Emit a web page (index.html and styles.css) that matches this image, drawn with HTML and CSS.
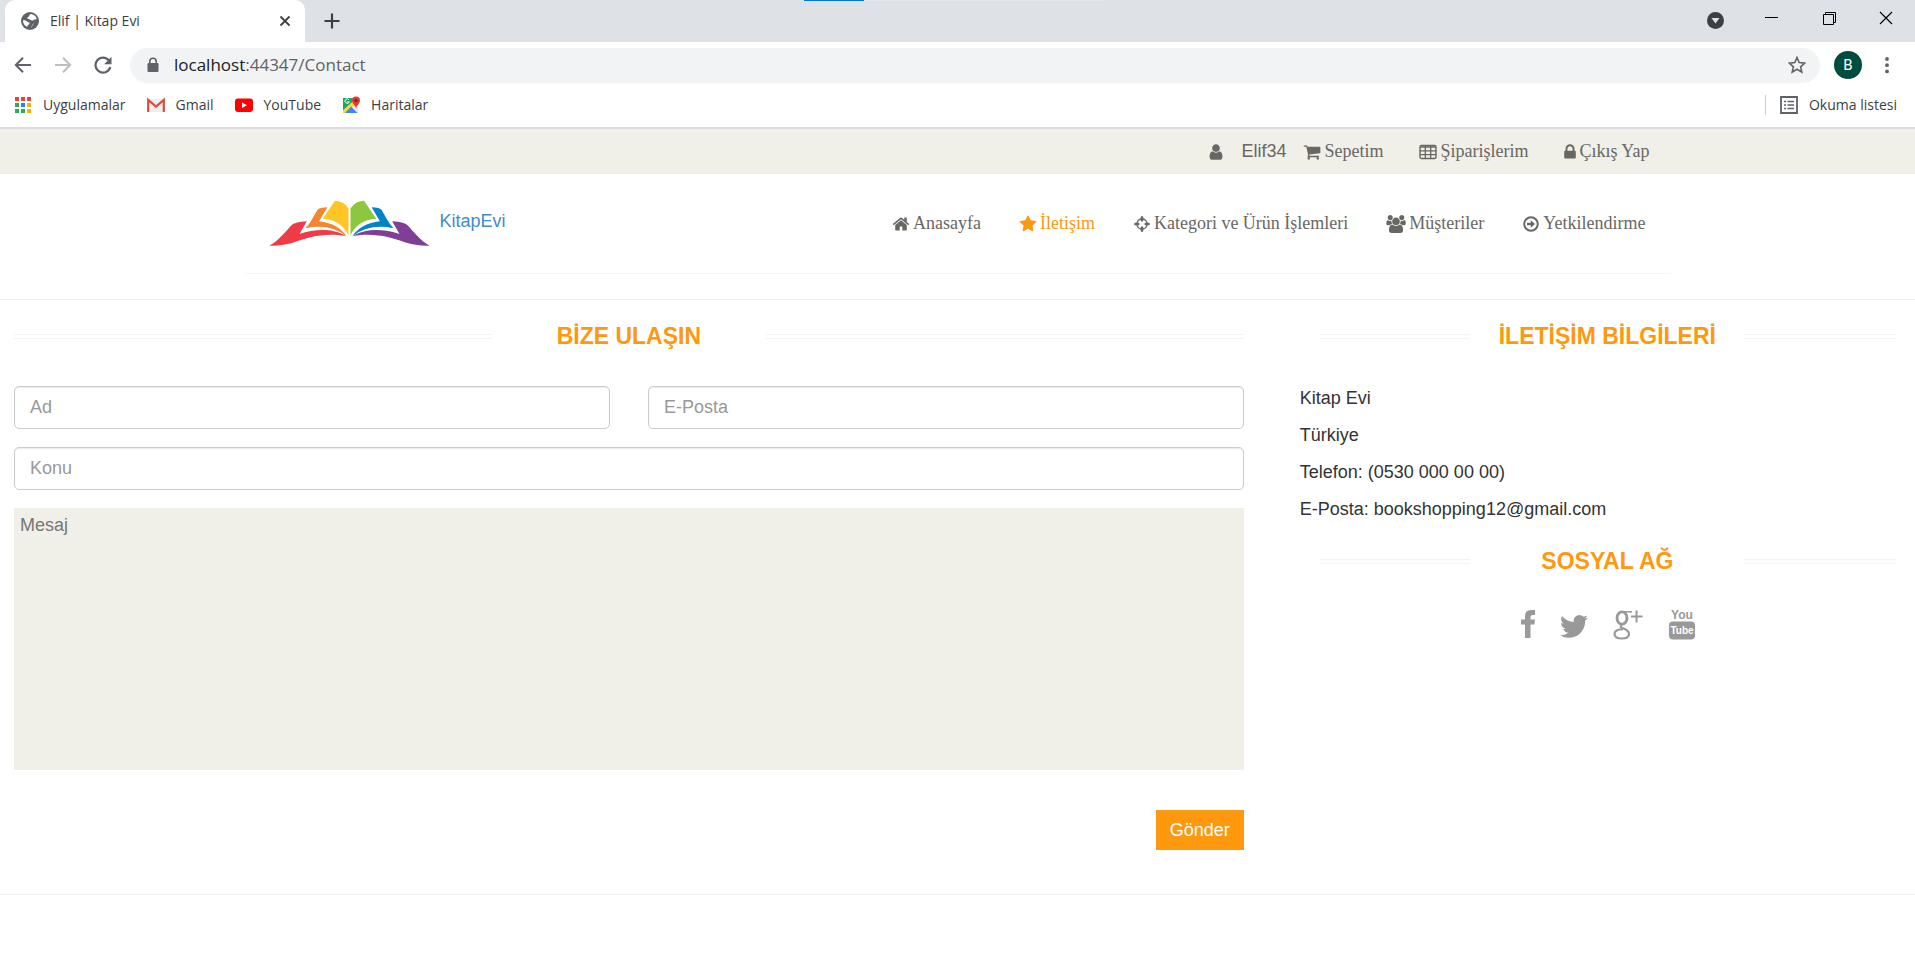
FILE: index.html
```html
<!DOCTYPE html>
<html lang="tr">
<head>
<meta charset="utf-8">
<title>Elif | Kitap Evi</title>
<link rel="stylesheet" href="styles.css">
</head>
<body>
<div class="browser">
  <div class="tabstrip">
    <div class="tab">
      <svg class="i18" viewBox="0 0 18 18"><circle cx="9" cy="9" r="9" fill="#5f6368"/><path d="M9.5 2c-1.800 1-.5 2.200-2 2.800S6 7 7.500 7s2.500 1.800 4 1.500 1.500-1.700 4.300-1.300A7 7 0 0 0 9.500 2zM2 8.500C2.500 8 5 8.500 6 9.500s2.500.5 2.500 2-2 1-2 2.500c0 1-1 .5-1 .5A7 7 0 0 1 2 8.500zM10 16c0-1.500 1.500-2 1.500-3.500L13 11" fill="#fff"/></svg>
      <span class="tab-title">Elif | Kitap Evi</span>
      <button class="plain" aria-label="Sekmeyi kapat"><svg class="i18" viewBox="0 0 18 18"><path d="M4.500 4.500l9 9m0-9l-9 9" stroke="#3c4043" stroke-width="1.800"/></svg></button>
    </div>
    <button class="plain newtab" aria-label="Yeni sekme"><svg class="i18" viewBox="0 0 18 18"><path d="M9 1.500v15M1.500 9h15" stroke="#3c4043" stroke-width="2.200"/></svg></button>
    <span class="strip-mark"><span class="strip-fill"></span></span>
    <div class="window-buttons">
      <button class="plain" aria-label="Sekmelerde ara"><svg class="i18" viewBox="0 0 18 18"><circle cx="9.500" cy="11.500" r="8.500" fill="#3c4043"/><path d="M5.500 9h8l-4 5.500z" fill="#dee1e6"/></svg></button>
      <button class="plain" aria-label="Simge durumuna küçült"><svg class="i18" viewBox="0 0 18 18"><path d="M2 8.500h13" stroke="#000"/></svg></button>
      <button class="plain" aria-label="Geri yükle"><svg class="i18" viewBox="0 0 18 18"><path d="M3.500 5.500h10v10h-10zM5.500 5.500v-2h10v10h-2" fill="none" stroke="#000"/></svg></button>
      <button class="plain" aria-label="Kapat"><svg class="i18" viewBox="0 0 18 18"><path d="M3 3l12 12M15 3L3 15" stroke="#000" stroke-width="1.200"/></svg></button>
    </div>
  </div>
  <div class="toolbar">
    <button class="plain" aria-label="Geri"><svg class="i18" viewBox="0 0 18 18"><path d="M17 9H2M9 1.800L1.800 9 9 16.200" fill="none" stroke="#5f6368" stroke-width="2"/></svg></button>
    <button class="plain" aria-label="İleri"><svg class="i18" viewBox="0 0 18 18"><path d="M1 9h15M9 1.800L16.200 9 9 16.200" fill="none" stroke="#bdbfc1" stroke-width="2"/></svg></button>
    <button class="plain" aria-label="Yenile"><svg class="i18" viewBox="0 0 18 18"><path d="M15 4.500A7.500 7.500 0 1 0 16.300 11" fill="none" stroke="#5f6368" stroke-width="2.200"/><path d="M17.500.8v7.400h-7.400z" fill="#5f6368"/></svg></button>
    <div class="omnibox">
      <svg class="i18" viewBox="0 0 18 18"><path d="M5.800 8V5.500a3.200 3.200 0 0 1 6.400 0V8" fill="none" stroke="#5f6368" stroke-width="1.600"/><rect x="3.500" y="7" width="11" height="9" rx="1.200" fill="#5f6368"/></svg>
      <div class="url" role="textbox" contenteditable="true" spellcheck="false" aria-label="Adres"><span class="host">localhost</span>:44347/Contact</div>
      <button class="plain" aria-label="Yer işareti"><svg class="i18" viewBox="0 0 18 18"><path d="M9 1.500l2.200 5.100 5.600.5-4.200 3.700 1.200 5.400L9 13.300l-4.800 2.900 1.200-5.400L1.200 7.100l5.600-.5z" fill="none" stroke="#5f6368" stroke-width="1.600"/></svg></button>
    </div>
    <button class="plain avatar" aria-label="Profil">B</button>
    <button class="plain" aria-label="Menü"><svg class="i18" viewBox="0 0 18 18"><g fill="#5f6368"><circle cx="9" cy="3" r="1.900"/><circle cx="9" cy="9.200" r="1.900"/><circle cx="9" cy="15.400" r="1.900"/></g></svg></button>
  </div>
  <div class="bookmarks">
    <a href="#"><svg class="i18" viewBox="0 0 18 18"><g fill="#ea4335"><path d="M1 1h4v4H1zM7 1h4v4H7zM13 1h4v4h-4z"/></g><path d="M1 7h4v4H1zM1 13h4v4H1z" fill="#34a853"/><path d="M7 7h4v4H7z" fill="#1a87f5"/><path d="M7 13h4v4H7z" fill="#34a853"/><path d="M13 7h4v4h-4zM13 13h4v4h-4z" fill="#fbb004"/></svg>Uygulamalar</a>
    <a href="#"><svg class="i18" viewBox="0 0 18 18"><path d="M2 3h14v13H2z" fill="#eee"/><path d="M1.200 16V3.800L9 10.500l7.800-6.700V16" fill="none" stroke="#dd4b3e" stroke-width="2.200"/></svg>Gmail</a>
    <a href="#"><svg class="i18" viewBox="0 0 18 18"><rect y="2.500" width="18" height="13.500" rx="3" fill="#f00"/><path d="M7 6.500v5.500l5-2.750z" fill="#fff"/></svg>YouTube</a>
    <a href="#"><svg class="i18" viewBox="0 0 18 18"><path d="M1 2h15v15H1z" fill="#e8eaed"/><path d="M1 2h11v5L1 16z" fill="#1fa463"/><path d="M1 14L13 3l3 3L4 17H1z" fill="#fdd835"/><path d="M1 2h9v4L1 14z" fill="#1fa463"/><path d="M3 17l6-6.500 6.500 6.500z" fill="#4285f4"/><path d="M7 3.800a2.200 2.200 0 1 0 .3 2H5.300" fill="none" stroke="#fff"/><path d="M14 13c0-3.500-4-5-4-8.500a4 4 0 0 1 8 0C18 8 14 9.500 14 13z" fill="#e53935"/><circle cx="14" cy="4.500" r="1.500" fill="#7d1a17"/></svg>Haritalar</a>
    <a class="reading" href="#"><svg class="i18" viewBox="0 0 18 18"><path d="M1 1h16v16H1z" fill="none" stroke="#5f6368" stroke-width="1.800"/><path d="M4 5.500h2m1.500 0H14M4 9h2m1.500 0H14M4 12.500h2m1.500 0H14" stroke="#5f6368" stroke-width="1.600"/></svg>Okuma listesi</a>
  </div>
</div>

<header>
  <div class="topbar">
    <nav class="container account">
      <a class="user" href="#"><svg class="fa" viewBox="0 0 1792 1792"><path d="M1536 1399q0 109-62.500 187t-150.500 78h-854q-88 0-150.500-78t-62.500-187q0-85 8.500-160.500t31.500-152 58.500-131 94-89 134.500-34.500q131 128 313 128t313-128q76 0 134.500 34.500t94 89 58.500 131 31.500 152 8.500 160.500zm-256-887q0 159-112.500 271.500t-271.500 112.500-271.500-112.500-112.500-271.500 112.500-271.500 271.500-112.500 271.500 112.500 112.500 271.500z"/></svg>Elif34</a>
      <a href="#"><svg class="fa" viewBox="0 0 1792 1792"><path d="M704 1536q0 52-38 90t-90 38-90-38-38-90 38-90 90-38 90 38 38 90zm896 0q0 52-38 90t-90 38-90-38-38-90 38-90 90-38 90 38 38 90zm128-1088v512q0 24-16.500 42.500t-40.500 21.500l-1044 122q13 60 13 70 0 16-24 64h920q26 0 45 19t19 45-19 45-45 19h-1024q-26 0-45-19t-19-45q0-11 8-31.500t16-36 21.500-40 15.500-29.500l-177-823h-204q-26 0-45-19t-19-45 19-45 45-19h256q16 0 28.500 6.500t19.500 15.500 13 24.500 8 26 5.500 29.500 4.500 26h1201q26 0 45 19t19 45z"/></svg>Sepetim</a>
      <a href="#"><svg class="fa" viewBox="0 0 18 18"><rect x="1" y="2.500" width="16" height="13" rx="1.500" fill="none" stroke="currentColor" stroke-width="1.400"/><path d="M1 4h16M1 7.800h16M1 11.600h16M6.300 3v12.500M11.700 3v12.500" stroke="currentColor" stroke-width="1.300"/></svg>Şiparişlerim</a>
      <a href="#"><svg class="fa narrow" viewBox="320 0 1152 1792"><path d="M640 768h512v-192q0-106-75-181t-181-75-181 75-75 181v192zm832 96v576q0 40-28 68t-68 28h-960q-40 0-68-28t-28-68v-576q0-40 28-68t68-28h32v-192q0-184 132-316t316-132 316 132 132 316v192h32q40 0 68 28t28 68z"/></svg>Çıkış Yap</a>
    </nav>
  </div>
  <div class="container masthead">
    <a class="brand" href="#">
      <svg class="logo" viewBox="87 60 484 142" role="img" aria-label="Kitap Evi logosu">
        <path fill="#ef3b46" d="M87 198C116 182 136 155 153 137Q160 126 200 124L178 163C225 147 280 145 318 169C255 158 205 172 162 188Q128 199 87 198z"/>
        <path fill="#f58530" d="M262 82Q238 82 232 90C220 110 212 128 196 145Q272 130 321 170C302 143 275 128 237 124z"/>
        <path fill="#ffc425" d="M285 62Q314 64 326 86V168C315 140 285 118 248 117z"/>
        <g transform="translate(658) scale(-1 1)">
          <path fill="#7f3f98" d="M87 198C116 182 136 155 153 137Q160 126 200 124L178 163C225 147 280 145 318 169C255 158 205 172 162 188Q128 199 87 198z"/>
          <path fill="#0083ca" d="M262 82Q238 82 232 90C220 110 212 128 196 145Q272 130 321 170C302 143 275 128 237 124z"/>
          <path fill="#8dc63f" d="M285 62Q314 64 326 86V168C315 140 285 118 248 117z"/>
        </g>
      </svg>
      KitapEvi
    </a>
    <nav class="menu">
      <a href="#"><svg class="fa" viewBox="0 0 1792 1792"><path d="M1472 992v480q0 26-19 45t-45 19h-384v-384h-256v384h-384q-26 0-45-19t-19-45v-480q0-1 .5-3t.5-3l575-474 575 474q1 2 1 6zm223-69l-62 74q-8 9-21 11h-3q-13 0-21-7l-692-577-692 577q-12 8-24 7-13-2-21-11l-62-74q-8-10-7-23.500t11-21.500l719-599q32-26 76-26t76 26l244 204v-195q0-14 9-23t23-9h192q14 0 23 9t9 23v408l219 182q10 8 11 21.500t-7 23.500z"/></svg>Anasayfa</a>
      <a class="active" href="#"><svg class="fa" viewBox="0 0 1792 1792"><path d="M1728 647q0 22-26 48l-363 354 86 500q1 7 1 20 0 21-10.500 35.500t-30.500 14.500q-19 0-40-12l-449-236-449 236q-22 12-40 12-21 0-31.500-14.500t-10.500-35.500q0-6 2-20l86-500-364-354q-25-27-25-48 0-37 56-46l502-73 225-455q19-41 49-41t49 41l225 455 502 73q56 9 56 46z"/></svg>İletişim</a>
      <a href="#"><svg class="fa" viewBox="0 0 1792 1792"><path d="M1325 1024h-109q-26 0-45-19t-19-45v-128q0-26 19-45t45-19h109q-32-108-112.500-188.500t-188.500-112.500v109q0 26-19 45t-45 19h-128q-26 0-45-19t-19-45v-109q-108 32-188.500 112.500t-112.500 188.500h109q26 0 45 19t19 45v128q0 26-19 45t-45 19h-109q32 108 112.500 188.500t188.500 112.500v-109q0-26 19-45t45-19h128q26 0 45 19t19 45v109q108-32 188.500-112.500t112.500-188.500zm339-192v128q0 26-19 45t-45 19h-143q-37 161-154.500 278.500t-278.500 154.500v143q0 26-19 45t-45 19h-128q-26 0-45-19t-19-45v-143q-161-37-278.500-154.500t-154.500-278.500h-143q-26 0-45-19t-19-45v-128q0-26 19-45t45-19h143q37-161 154.500-278.500t278.500-154.500v-143q0-26 19-45t45-19h128q26 0 45 19t19 45v143q161 37 278.500 154.500t154.500 278.500h143q26 0 45 19t19 45z"/></svg>Kategori ve Ürün İşlemleri</a>
      <a href="#"><svg class="fa wide" viewBox="0 0 1920 1792"><path d="M593 896q-162 5-265 128h-134q-82 0-138-40.500t-56-118.500q0-353 124-353 6 0 43.500 21t97.500 42.500 119 21.500q67 0 133-23-5 37-5 66 0 159 93 258zm1071 637q0 120-73 189.500t-194 69.500h-874q-121 0-194-69.500t-73-189.500q0-53 3.500-103.500t14-109 26.500-108.500 43-97.500 62-81 85.500-53.500 111.500-20q10 0 43 21.500t73 48 107 48 135 21.500 135-21.500 107-48 73-48 43-21.500q61 0 111.500 20t85.500 53.500 62 81 43 97.500 26.500 108.500 14 109 3.500 103.500zm-1024-1277q0 106-75 181t-181 75-181-75-75-181 75-181 181-75 181 75 75 181zm704 384q0 159-112.500 271.500t-271.500 112.500-271.500-112.500-112.500-271.500 112.500-271.500 271.500-112.500 271.500 112.500 112.500 271.500zm576 225q0 78-56 118.500t-138 40.500h-134q-103-123-265-128 93-99 93-258 0-29-5-66 66 23 133 23 59 0 119-21.500t97.500-42.500 43.500-21q124 0 124 353zm-128-609q0 106-75 181t-181 75-181-75-75-181 75-181 181-75 181 75 75 181z"/></svg>Müşteriler</a>
      <a href="#"><svg class="fa" viewBox="0 0 18 18"><circle cx="9" cy="9" r="6.800" fill="none" stroke="currentColor" stroke-width="2"/><path d="M5 7.800h3.800V5.300L13 9l-4.200 3.700v-2.500H5z"/></svg>Yetkilendirme</a>
    </nav>
  </div>
</header>

<main class="contact">
  <section>
    <h2 class="title"><span>BİZE ULAŞIN</span></h2>
    <form class="form">
      <input type="text" placeholder="Ad" aria-label="Ad">
      <input type="email" placeholder="E-Posta" aria-label="E-Posta">
      <input class="full" type="text" placeholder="Konu" aria-label="Konu">
      <textarea class="full" placeholder="Mesaj" aria-label="Mesaj"></textarea>
      <button class="send" type="button">Gönder</button>
    </form>
  </section>
  <section class="info">
    <h2 class="title"><span>İLETİŞİM BİLGİLERİ</span></h2>
    <address>
      <p>Kitap Evi</p>
      <p>Türkiye</p>
      <p>Telefon: (0530 000 00 00)</p>
      <p>E-Posta: bookshopping12@gmail.com</p>
    </address>
    <h2 class="title"><span>SOSYAL AĞ</span></h2>
    <div class="social">
      <a href="#" aria-label="Facebook"><svg width="14" height="32" viewBox="0 0 14 32"><path d="M4 30V16.500H0v-5h4V8q0-6 6-6h4v5h-2.500Q9.500 7 9.500 9v2.500H14l-.6 5H9.500V30z"/></svg></a>
      <a href="#" aria-label="Twitter"><svg width="28" height="32" viewBox="108 -140 1576 1800"><path d="M1684 408q-67 98-162 167 1 14 1 42 0 130-38 259.500t-115.500 248.500-184.500 210.500-258 146-323 54.500q-271 0-496-145 35 4 78 4 225 0 401-138-105-2-188-64.500t-114-159.500q33 5 61 5 43 0 85-11-112-23-185.500-111.500t-73.500-205.500v-4q68 38 146 41-66-44-105-115t-39-154q0-88 44-163 121 149 294.500 238.500t371.500 99.500q-8-38-8-74 0-134 94.500-228.500t228.500-94.500q140 0 236 102 109-21 205-78-37 115-142 178 93-10 186-50z"/></svg></a>
      <a href="#" aria-label="Google+"><svg width="30" height="32" viewBox="0 0 30 32"><g fill="none" stroke="currentColor"><path d="M19 3.800h-8.500" stroke-width="1.600"/><ellipse cx="9" cy="10" rx="5" ry="6.200" stroke-width="2.800"/><path d="M9.500 16.200q-2.500 1.800-1.500 3.600" stroke-width="2"/><path d="M8 19.500q8 2.500 8 6.500 0 4.500-7.200 4.500T1.500 26q0-4.500 8.500-4.800" stroke-width="2.200"/><path d="M23.500 2.500v12M18 8.500h11.500" stroke-width="2"/></g></svg></a>
      <a href="#" aria-label="YouTube"><svg width="28" height="32" viewBox="0 0 28 32"><text class="yt" x="14" y="11" text-anchor="middle">You</text><rect x="1" y="13.500" width="26" height="18" rx="4"/><text class="yt light" x="14" y="26" text-anchor="middle">Tube</text></svg></a>
    </div>
  </section>
</main>
<hr class="rule">
</body>
</html>
```
FILE: styles.css
```css
* { box-sizing: border-box; }

body {
  margin: 0;
  background: #fff;
  color: #333;
  font: 18px/25px "Liberation Sans", Arial, sans-serif;
}

a { color: inherit; text-decoration: none; }
svg { display: block; flex: none; }

.plain {
  padding: 0;
  border: 0;
  background: none;
  cursor: pointer;
}

.i18 { width: 18px; height: 18px; }

/* Browser window */
.browser {
  border-bottom: 2px solid #dadce0;
  color: #3c4043;
  font: 15px/20px "Open Sans", "Noto Sans", sans-serif;
}

.tabstrip {
  position: relative;
  display: flex;
  align-items: center;
  height: 42px;
  padding-left: 5px;
  background: #dee1e6;
}

.tab {
  display: flex;
  align-items: center;
  gap: 11px;
  width: 300px;
  height: 42px;
  padding: 0 11px 0 16px;
  border-radius: 10px 10px 0 0;
  background: #fff;
  font-size: 14px;
}

.tab-title { flex: 1; }
.newtab { margin-left: 18px; }

.strip-mark {
  position: absolute;
  top: 0;
  left: 42%;
  width: 300px;
  height: 1px;
  background: #e6e6e6;
}

.strip-fill {
  display: block;
  width: 60px;
  height: 1px;
  background: #0078d7;
}

.window-buttons {
  display: flex;
  gap: 39px;
  height: 36px;
  align-items: center;
  align-self: flex-start;
  margin-left: auto;
  padding-right: 20px;
}

.window-buttons svg { overflow: visible; }

.toolbar {
  display: flex;
  align-items: center;
  gap: 22px;
  height: 46px;
  padding: 0 19px 0 14px;
}

.omnibox {
  display: flex;
  flex: 1;
  align-items: center;
  gap: 12px;
  height: 35px;
  margin: 0 -8px 0 -4px;
  padding: 0 14px;
  border-radius: 18px;
  background: #f1f3f4;
}

.url {
  flex: 1;
  color: #5f6368;
  font-size: 17px;
}

.host { color: #202124; }

.avatar {
  width: 28px;
  height: 28px;
  margin-right: -6px;
  border-radius: 50%;
  background: #004d40;
  color: #fff;
  font: 15px/28px Roboto, sans-serif;
}

.bookmarks {
  display: flex;
  align-items: center;
  gap: 21px;
  height: 39px;
  padding: 0 18px 5px 14px;
  font-size: 14px;
}

.bookmarks a {
  display: flex;
  align-items: center;
  gap: 11px;
}

.bookmarks .reading {
  margin-left: auto;
  padding-left: 14px;
  border-left: 1px solid #c8cbcf;
}

/* Site header */
.container {
  max-width: 1426px;
  margin: 0 auto;
}

.topbar { background: #f0f0e9; }

.account,
.menu {
  display: flex;
  justify-content: flex-end;
  color: #696763;
  font-family: "Liberation Serif", "Times New Roman", serif;
}

.account {
  gap: 36px;
  height: 45px;
  align-items: center;
  padding-right: 21px;
}

.account a,
.menu a {
  display: flex;
  align-items: center;
  gap: 3px;
}

.account .user {
  gap: 16px;
  margin-right: -19px;
  font-family: "Liberation Sans", Arial, sans-serif;
}

.fa {
  width: 18px;
  height: 18px;
  fill: currentColor;
}

.fa.narrow { width: 12px; }
.fa.wide { width: 20px; }

.masthead {
  display: flex;
  justify-content: space-between;
  align-items: flex-start;
  height: 100px;
  padding: 26px 25px 0 24px;
  border-bottom: 1px solid #f5f5f5;
}

.brand {
  display: flex;
  gap: 10px;
  color: #428bca;
  line-height: 42px;
}

.logo { width: 161px; height: 47px; }

.menu {
  gap: 38px;
  padding-top: 11px;
}

.menu .active { color: #fe980f; }

header {
  padding-bottom: 25px;
  border-bottom: 1px solid #eee;
}

/* Contact page */
.contact {
  display: grid;
  grid-template-columns: minmax(0, 33fr) minmax(0, 16fr);
  gap: 56px;
  padding: 24px 19px 44px 14px;
}

.title {
  display: grid;
  grid-template-columns: 1fr 274px 1fr;
  align-items: center;
  margin: 0 0 37px;
  color: #fe980f;
  font-size: 23px;
  line-height: 25px;
  text-align: center;
}

.title::before,
.title::after {
  content: "";
  height: 3px;
  border: 1px solid #f3f3f3;
  border-width: 1px 0;
}

.form {
  display: grid;
  grid-template-columns: 1fr 1fr;
  gap: 18px 38px;
}

.full { grid-column: 1 / -1; }

.form input {
  min-width: 0;
  height: 43px;
  padding: 0 15px;
  border: 1px solid #ccc;
  border-radius: 5px;
  box-shadow: inset 0 1px 1px rgba(0, 0, 0, .08);
  font: inherit;
}

.form input::placeholder { color: #999; }

.form textarea {
  height: 262px;
  padding: 5px 6px;
  border: 0;
  background: #f0f0e9;
  font: inherit;
  resize: none;
}

.form textarea::placeholder { color: #777; }

.send {
  grid-column: 2;
  justify-self: end;
  height: 40px;
  margin-top: 22px;
  padding: 0 14px;
  border: 0;
  background: #fe980f;
  color: #fff;
  font: inherit;
}

.info .title { margin-left: 19px; }

address { font-style: normal; }
address p { margin: 0 0 12px; }
address + .title { margin: 27px 0 34px; }

.social {
  display: flex;
  justify-content: center;
  gap: 25px;
  padding-left: 21px;
  color: #999;
}

.social svg { fill: currentColor; }

.yt {
  fill: #999;
  font: bold 12px "Liberation Sans Narrow", "Liberation Sans", sans-serif;
}

.yt.light { fill: #fff; font-size: 10px; }

.rule {
  margin: 0;
  border: 0;
  border-top: 1px solid #eee;
}
```
